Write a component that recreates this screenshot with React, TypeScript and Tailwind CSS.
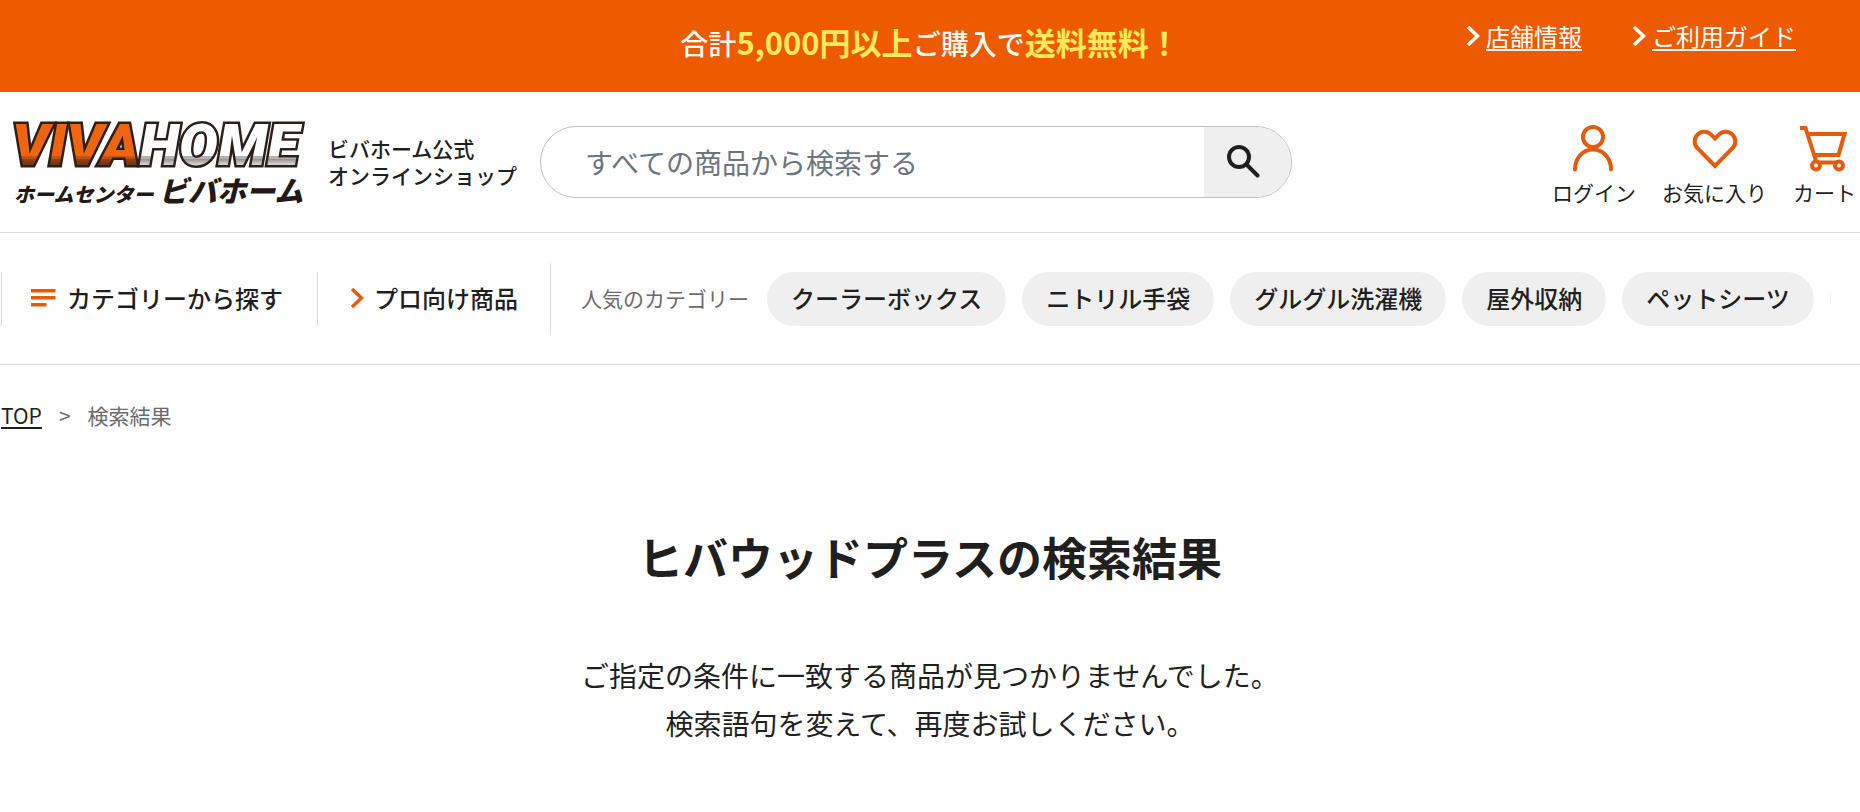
import type { ReactNode } from "react";

const popular = ["クーラーボックス", "ニトリル手袋", "グルグル洗濯機", "屋外収納", "ペットシーツ"];

const guideLinks = ["店舗情報", "ご利用ガイド"];

function Chevron({ className }: { className?: string }) {
  return (
    <svg className={className} width="14" height="20" viewBox="0 0 14 20" fill="none" stroke="currentColor" strokeWidth="3.500" aria-hidden="true">
      <path d="M2 1 11.500 10 2 19" />
    </svg>
  );
}

function Logo() {
  return (
    <svg className="overflow-visible" width="292" height="84" viewBox="0 0 292 84" role="img" aria-label="VIVAHOME ホームセンター ビバホーム">
      <defs>
        <linearGradient id="viva" gradientUnits="userSpaceOnUse" x1="0" y1="0" x2="0" y2="48">
          <stop offset="0.74" stopColor="#ee640f" />
          <stop offset="0.74" stopColor="#cf590f" />
          <stop offset="0.82" stopColor="#b54d0f" />
          <stop offset="0.82" stopColor="#92400f" />
          <stop offset="0.96" stopColor="#6a3012" />
        </linearGradient>
        <linearGradient id="home" gradientUnits="userSpaceOnUse" x1="0" y1="0" x2="0" y2="48">
          <stop offset="0.74" stopColor="#ffffff" />
          <stop offset="0.74" stopColor="#b5b1b0" />
          <stop offset="0.82" stopColor="#b5b1b0" />
          <stop offset="0.82" stopColor="#989392" />
          <stop offset="0.9" stopColor="#c9c6c5" />
          <stop offset="0.96" stopColor="#dddbda" />
        </linearGradient>
      </defs>
      <text
        className="font-['Roboto'] font-black italic [paint-order:stroke]"
        x="-1"
        y="45"
        fontSize="58"
        stroke="#2b1f1c"
        strokeWidth="5"
      >
        <tspan fill="url(#viva)">VIVA</tspan>
        <tspan fill="url(#home)">HOME</tspan>
      </text>
      <g className="font-['Noto_Sans_CJK_JP'] font-black italic" fill="#231815">
        <text x="1" y="82" fontSize="20">ホームセンター</text>
        <text x="146" y="82" fontSize="29">ビバホーム</text>
      </g>
    </svg>
  );
}

function HeaderLink({ label, children }: { label: string; children: ReactNode }) {
  return (
    <a href="#" className="flex flex-col items-center gap-1">
      <svg width="50" height="50" viewBox="0 0 50 50" fill="none" stroke="#e35b0c" strokeWidth="4" aria-hidden="true">
        {children}
      </svg>
      <span className="text-[21px] leading-8">{label}</span>
    </a>
  );
}

export default function App() {
  return (
    <div className="min-h-screen bg-white text-[#1f1f1f] font-['Noto_Sans_CJK_JP',sans-serif]">
      {/* Banner */}
      <div className="grid grid-cols-[1fr_auto_1fr] h-[92px] bg-[#ee5a00] text-white">
        <div />
        <p className="self-center text-[28px] leading-10 font-medium pb-2">
          合計<strong className="text-[31px] font-bold text-[#ffe95c]">5,000円以上</strong>ご購入で
          <strong className="text-[31px] font-bold text-[#ffe95c]">送料無料！</strong>
        </p>
        <nav className="flex justify-end gap-[50px] pt-[18px] pr-16">
          {guideLinks.map((l) => (
            <a key={l} href="#" className="flex items-center gap-1.5 h-9 text-2xl">
              <Chevron />
              <span className="underline underline-offset-3 decoration-2">{l}</span>
            </a>
          ))}
        </nav>
      </div>

      {/* Header */}
      <header className="flex items-center h-[141px] pl-[13px] pr-1 border-b border-[#dcdcdc]">
        <a href="#" className="shrink-0"><Logo /></a>
        <p className="ml-[23px] text-[21px] leading-[27px] font-medium whitespace-nowrap">
          ビバホーム公式<br />オンラインショップ
        </p>
        <form className="flex w-[752px] h-[72px] ml-[23px] rounded-full border border-[#bfbfbf] overflow-hidden" onSubmit={(e) => e.preventDefault()}>
          <input
            type="search"
            aria-label="商品検索"
            placeholder="すべての商品から検索する"
            className="flex-1 min-w-0 pl-11 text-[28px] placeholder:text-[#6c757d] outline-none"
          />
          <button type="submit" aria-label="検索" className="w-[87px] bg-[#efefef] pl-[22px]">
            <svg width="34" height="34" viewBox="0 0 34 34" fill="none" stroke="#1f1f1f" strokeWidth="4" strokeLinecap="round" aria-hidden="true">
              <circle cx="13" cy="12" r="10" />
              <path d="m20.500 19.500 11 11" />
            </svg>
          </button>
        </form>
        <nav className="flex gap-[26px] ml-auto pt-1.5">
          <HeaderLink label="ログイン">
            <circle cx="24" cy="15" r="10" />
            <path d="M6 47.500C6 36 14 27.500 24 27.500S42 36 42 47.500" strokeLinecap="round" />
          </HeaderLink>
          <HeaderLink label="お気に入り">
            <path d="M25 44 7.500 26.200a9.600 9.600 0 0 1 13.600-13.600L25 16.500l3.900-3.900a9.600 9.600 0 0 1 13.600 13.600Z" />
          </HeaderLink>
          <HeaderLink label="カート">
            <path d="M-1 6h6.500l11 34.500M7.500 12h37l-6 21H14M18 40.500h20" />
            <circle cx="16" cy="43.500" r="4" />
            <circle cx="39" cy="43.500" r="4" />
          </HeaderLink>
        </nav>
      </header>

      {/* Category nav */}
      <nav className="flex items-center h-[132px] pl-px border-b border-[#dcdcdc] whitespace-nowrap">
        <a href="#" className="flex items-center w-[317px] h-[54px] pl-[29px] pb-0.5 gap-[11px] border-x border-[#dcdcdc] text-2xl font-medium">
          <svg width="25" height="18" viewBox="0 0 25 18" fill="#e35b0c" aria-hidden="true">
            <path d="M0 0h24.500v3.500H0zM0 7h24.500v3.500H0zM0 14h15.500v3.500H0z" />
          </svg>
          カテゴリーから探す
        </a>
        <a href="#" className="flex items-center w-[233px] h-[72px] pl-8 pb-0.5 gap-2.5 border-r border-[#dcdcdc] text-2xl font-medium">
          <Chevron className="text-[#e35b0c]" />
          プロ向け商品
        </a>
        <p className="ml-[30px] mr-[18px] text-[21px] text-[#6b6b6b]">人気のカテゴリー</p>
        <ul className="flex items-center gap-4">
          {popular.map((p) => (
            <li key={p}>
              <a href="#" className="flex items-center h-[54px] px-6 pb-0.5 rounded-full bg-[#efefef] text-2xl font-medium">{p}</a>
            </li>
          ))}
          <li className="w-px h-3 bg-[#f3f3f3]" />
        </ul>
      </nav>

      {/* Breadcrumb */}
      <nav className="flex gap-[17px] pt-[34px] pl-px text-[21px] leading-8 text-[#6b6b6b]">
        <a href="#" className="underline underline-offset-3 decoration-2 text-[#1f1f1f]">TOP</a>
        <span>&gt;</span>
        <span>検索結果</span>
      </nav>

      {/* Result */}
      <main className="pt-24 text-center">
        <h1 className="text-[45px] leading-[60px] font-bold">ヒバウッドプラスの検索結果</h1>
        <p className="mt-16 text-[28px] leading-[48px]">
          ご指定の条件に一致する商品が見つかりませんでした。<br />
          検索語句を変えて、再度お試しください。
        </p>
      </main>
    </div>
  );
}
